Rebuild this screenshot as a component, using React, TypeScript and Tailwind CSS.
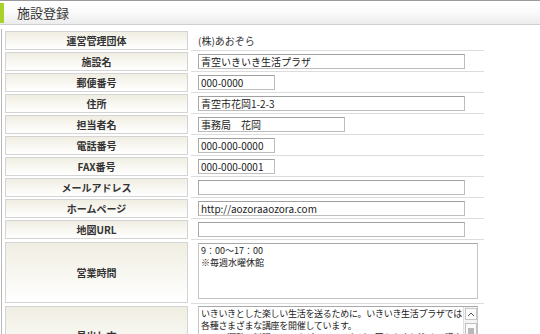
import React from "react";

const font = { fontFamily: '"Noto Sans CJK JP", "Noto Sans", sans-serif' };

function Label({ children, tall }: { children: React.ReactNode; tall?: string }) {
  return (
    <div
      className={`w-[183px] shrink-0 border border-[#d4d4d4] bg-gradient-to-b from-[#f0eee2] to-[#ffffff] flex items-center justify-center text-[10px] font-bold text-[#333] ${tall ?? "h-[19px]"}`}
    >
      {children}
    </div>
  );
}

function Input({ w, value }: { w: string; value?: string }) {
  return (
    <div
      className={`${w} h-[15px] border border-[#bdbdbd] border-t-[#a0a0a0] border-l-[#a8a8a8] bg-white px-[2px] text-[10px] leading-[13px] text-[#222] whitespace-nowrap overflow-hidden`}
    >
      {value}
    </div>
  );
}

function Row({ label, children }: { label: string; children?: React.ReactNode }) {
  return (
    <div className="flex h-[21px]">
      <div className="pt-[1px] pl-[3px]">
        <Label>{label}</Label>
      </div>
      <div className="ml-[3px] w-[293px] border-b border-[#dcdcdc] flex items-center pl-[7px] text-[10px] text-[#333]">
        {children}
      </div>
    </div>
  );
}

export default function App() {
  return (
    <div className="w-[540px] h-[334px] overflow-hidden bg-white" style={font}>
      <div className="h-[25px] border-t border-[#9a9a9a] border-b border-b-[#cfcfcf] bg-gradient-to-b from-[#ffffff] via-[#fafafa] to-[#ececec] flex items-center">
        <div className="w-[4px] h-[20px] bg-[#a8d12c]" />
        <div className="ml-[13px] text-[13px] text-[#333] leading-none">施設登録</div>
      </div>
      <div className="mt-[4px] border-l border-[#b8b8b8] ml-[1px] pt-[1px]">
        <Row label="運営管理団体">(株)あおぞら</Row>
        <Row label="施設名">
          <Input w="w-[267px]" value="青空いきいき生活プラザ" />
        </Row>
        <Row label="郵便番号">
          <Input w="w-[77px]" value="000-0000" />
        </Row>
        <Row label="住所">
          <Input w="w-[267px]" value="青空市花岡1-2-3" />
        </Row>
        <Row label="担当者名">
          <Input w="w-[147px]" value="事務局　花岡" />
        </Row>
        <Row label="電話番号">
          <Input w="w-[77px]" value="000-000-0000" />
        </Row>
        <Row label="FAX番号">
          <Input w="w-[77px]" value="000-000-0001" />
        </Row>
        <Row label="メールアドレス">
          <Input w="w-[267px]" />
        </Row>
        <Row label="ホームページ">
          <Input w="w-[267px]" value="http://aozoraaozora.com" />
        </Row>
        <Row label="地図URL">
          <Input w="w-[267px]" />
        </Row>
        <div className="flex h-[64px]">
          <div className="pt-[2px] pl-[3px]">
            <Label tall="h-[61px]">営業時間</Label>
          </div>
          <div className="ml-[3px] w-[293px] border-b border-[#dcdcdc] pl-[7px] pt-[3px]">
            <div className="w-[280px] h-[56px] border border-[#c4c4c4] border-t-[#a8a8a8] px-[2px] pt-[1px] text-[9px] leading-[12px] text-[#222]">
              <div>9：00～17：00</div>
              <div>※毎週水曜休館</div>
            </div>
          </div>
        </div>
        <div className="flex h-[60px]">
          <div className="pt-[2px] pl-[3px]">
            <Label tall="h-[58px]">見出し文</Label>
          </div>
          <div className="ml-[3px] w-[293px] pl-[7px] pt-[2px]">
            <div className="w-[280px] h-[60px] border border-[#c4c4c4] border-t-[#a8a8a8] flex">
              <div className="flex-1 px-[2px] pt-[1px] text-[9px] leading-[12px] tracking-[-0.3px] text-[#222] whitespace-nowrap overflow-hidden">
                <div>いきいきとした楽しい生活を送るために。いきいき生活プラザでは</div>
                <div>各種さまざまな講座を開催しています。</div>
                <div>・・・運動・料理・リラクゼーションなど１回から申し込める講座</div>
              </div>
              <div className="w-[14px] bg-[#f4f4f4] border-l border-[#e0e0e0] flex flex-col items-center pt-[1px] gap-[3px]">
                <div className="w-[12px] h-[12px] border border-[#c8c8c8] bg-[#fafafa] flex items-center justify-center">
                  <svg width="6" height="4" viewBox="0 0 6 4"><path d="M0 4 L3 1 L6 4" fill="none" stroke="#555" strokeWidth="1" /></svg>
                </div>
                <div className="w-[12px] h-[16px] border border-[#c0c0c0] bg-[#fafafa] flex items-center justify-center">
                  <svg width="6" height="6" viewBox="0 0 6 6"><path d="M0 1H6M0 3H6M0 5H6" stroke="#777" strokeWidth="1" /></svg>
                </div>
              </div>
            </div>
          </div>
        </div>
      </div>
    </div>
  );
}
